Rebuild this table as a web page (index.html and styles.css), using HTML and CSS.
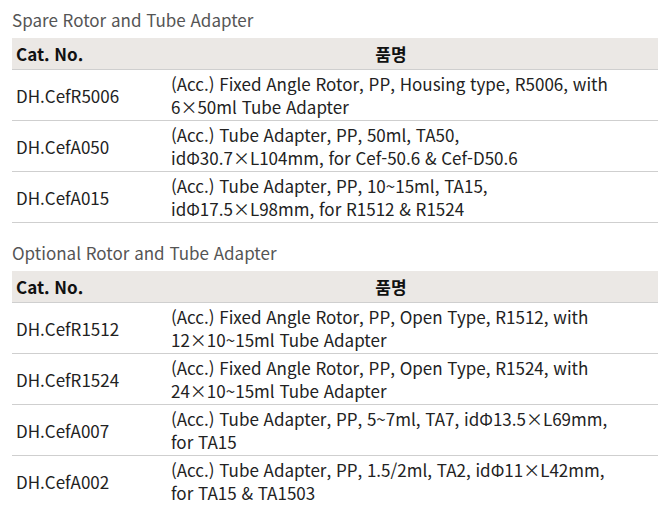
FILE: index.html
```html
<!DOCTYPE html>
<html lang="ko">
<head>
<meta charset="utf-8">
<link rel="stylesheet" href="styles.css">
</head>
<body>
<section class="block">
  <h2 class="title">Spare Rotor and Tube Adapter</h2>
  <table class="spec">
    <thead>
      <tr><th class="cat">Cat. No.</th><th class="name">품명</th></tr>
    </thead>
    <tbody>
      <tr><td class="cat">DH.CefR5006</td><td>(Acc.) Fixed Angle Rotor, PP, Housing type, R5006, with<br>6×50ml Tube Adapter</td></tr>
      <tr><td class="cat">DH.CefA050</td><td>(Acc.) Tube Adapter, PP, 50ml, TA50,<br>idΦ30.7×L104mm, for Cef-50.6 &amp; Cef-D50.6</td></tr>
      <tr><td class="cat">DH.CefA015</td><td>(Acc.) Tube Adapter, PP, 10~15ml, TA15,<br>idΦ17.5×L98mm, for R1512 &amp; R1524</td></tr>
    </tbody>
  </table>
</section>
<section class="block">
  <h2 class="title">Optional Rotor and Tube Adapter</h2>
  <table class="spec">
    <thead>
      <tr><th class="cat">Cat. No.</th><th class="name">품명</th></tr>
    </thead>
    <tbody>
      <tr><td class="cat">DH.CefR1512</td><td>(Acc.) Fixed Angle Rotor, PP, Open Type, R1512, with<br>12×10~15ml Tube Adapter</td></tr>
      <tr><td class="cat">DH.CefR1524</td><td>(Acc.) Fixed Angle Rotor, PP, Open Type, R1524, with<br>24×10~15ml Tube Adapter</td></tr>
      <tr><td class="cat">DH.CefA007</td><td>(Acc.) Tube Adapter, PP, 5~7ml, TA7, idΦ13.5×L69mm,<br>for TA15</td></tr>
      <tr><td class="cat">DH.CefA002</td><td>(Acc.) Tube Adapter, PP, 1.5/2ml, TA2, idΦ11×L42mm,<br>for TA15 &amp; TA1503</td></tr>
    </tbody>
  </table>
</section>
</body>
</html>
```
FILE: styles.css
```css
html, body { margin: 0; padding: 0; background: #fff; }
body {
  padding: 8px 2px 0 12px;
  font-family: "Noto Sans CJK KR", "Noto Sans", sans-serif;
  color: #222;
}
.block { margin-bottom: 18px; }
.title {
  margin: 0 0 6px 0;
  font-size: 17px;
  font-weight: 400;
  color: #555;
  line-height: 24px;
}
.spec {
  width: 646px;
  border-collapse: collapse;
  font-size: 17px;
}
.spec th {
  background: #ebe8e5;
  height: 31px;
  padding: 0 4px;
  line-height: 23px;
  font-weight: 700;
  color: #111;
  border-bottom: 1px solid #cfcfcf;
  text-align: left;
}
.spec th.name { text-align: center; padding-right: 47px; }
.spec td {
  padding: 2px 4px 2px 4px;
  line-height: 23px;
  border-bottom: 1px solid #cfcfcf;
  vertical-align: middle;
}
.spec .cat { width: 147px; }
```
